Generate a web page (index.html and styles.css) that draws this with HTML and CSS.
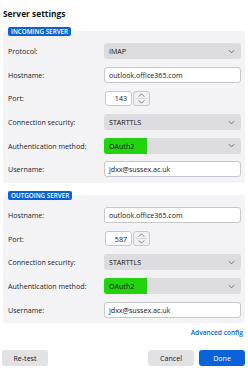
FILE: index.html
```html
<!DOCTYPE html>
<html>
<head>
<meta charset="utf-8">
<link rel="stylesheet" href="styles.css">
</head>
<body>
<div class="page">
  <h1 class="title">Server settings</h1>

  <section class="panel">
    <span class="badge">INCOMING SERVER</span>
    <div class="row"><span class="label">Protocol:</span><div class="select"><span>IMAP</span><svg class="chev" viewBox="0 0 8 5"><path d="M1 1l3 3 3-3" fill="none" stroke="#555" stroke-width="0.9"/></svg></div></div>
    <div class="row"><span class="label">Hostname:</span><div class="input">outlook.office365.com</div></div>
    <div class="row"><span class="label">Port:</span><div class="port"><div class="input num">143</div><div class="spin"><svg viewBox="0 0 16 14"><path d="M5 5l3-3 3 3" fill="none" stroke="#666" stroke-width="0.9"/><path d="M5 9l3 3 3-3" fill="none" stroke="#666" stroke-width="0.9"/><line x1="2" y1="7" x2="14" y2="7" stroke="#ccc" stroke-width="0.7"/></svg></div></div></div>
    <div class="row"><span class="label">Connection security:</span><div class="select"><span>STARTTLS</span><svg class="chev" viewBox="0 0 8 5"><path d="M1 1l3 3 3-3" fill="none" stroke="#555" stroke-width="0.9"/></svg></div></div>
    <div class="row"><span class="label">Authentication method:</span><div class="select"><span class="hl">OAuth2</span><svg class="chev" viewBox="0 0 8 5"><path d="M1 1l3 3 3-3" fill="none" stroke="#555" stroke-width="0.9"/></svg></div></div>
    <div class="row"><span class="label">Username:</span><div class="input">jdxx@sussex.ac.uk</div></div>
  </section>

  <section class="panel">
    <span class="badge">OUTGOING SERVER</span>
    <div class="row"><span class="label">Hostname:</span><div class="input">outlook.office365.com</div></div>
    <div class="row"><span class="label">Port:</span><div class="port"><div class="input num">587</div><div class="spin"><svg viewBox="0 0 16 14"><path d="M5 5l3-3 3 3" fill="none" stroke="#666" stroke-width="0.9"/><path d="M5 9l3 3 3-3" fill="none" stroke="#666" stroke-width="0.9"/><line x1="2" y1="7" x2="14" y2="7" stroke="#ccc" stroke-width="0.7"/></svg></div></div></div>
    <div class="row"><span class="label">Connection security:</span><div class="select"><span>STARTTLS</span><svg class="chev" viewBox="0 0 8 5"><path d="M1 1l3 3 3-3" fill="none" stroke="#555" stroke-width="0.9"/></svg></div></div>
    <div class="row"><span class="label">Authentication method:</span><div class="select"><span class="hl">OAuth2</span><svg class="chev" viewBox="0 0 8 5"><path d="M1 1l3 3 3-3" fill="none" stroke="#555" stroke-width="0.9"/></svg></div></div>
    <div class="row"><span class="label">Username:</span><div class="input">jdxx@sussex.ac.uk</div></div>
  </section>

  <div class="adv"><a class="link">Advanced config</a></div>

  <div class="buttons">
    <button class="btn">Re-test</button>
    <div class="spacer"></div>
    <button class="btn">Cancel</button>
    <button class="btn primary">Done</button>
  </div>
</div>
</body>
</html>
```

FILE: styles.css
```css
* { box-sizing: border-box; }
html, body { margin: 0; padding: 0; background: #fff; }
body { font-family: "Open Sans", "Noto Sans", sans-serif; font-size: 7.1px; color: #15141a; }
.page { padding: 8px 3px 0 3px; }
.title { font-size: 8.4px; font-weight: 700; margin: 0 0 11px 0; line-height: 12px; }
.panel { position: relative; background: #f3f3f5; border-radius: 3px; padding: 8.5px 4px 1.5px 5px; }
.panel + .panel { margin-top: 12.4px; }
.badge { position: absolute; top: -4px; left: 5px; background: #0a62db; color: #fff; font-size: 6.3px; font-weight: 600; line-height: 9px; padding: 0 3px; border-radius: 2px; }
.row { display: flex; align-items: center; height: 23.6px; }
.label { width: 96px; color: #222; }
.select, .input { flex: 1; height: 16px; border-radius: 3px; display: flex; align-items: center; }
.select { background: #dcdcdf; justify-content: space-between; padding-left: 5px; padding-right: 6px; }
.select .hl { background: #22d20c; margin-left: -5px; height: 16px; line-height: 16px; padding: 0 3px 0 5px; width: 43px; border-radius: 3px 0 0 3px; }
.chev { width: 7px; height: 5px; }
.input { background: #fff; border: 1px solid #c8c8cc; padding-left: 4px; }
.port { flex: 0 0 auto; display: flex; align-items: center; height: 16px; margin-left: 1px; }
.input.num { width: 27px; justify-content: flex-end; padding-right: 4px; flex: none; height: 15px; }
.spin { width: 17px; height: 15px; margin-left: 1px; border: 1px solid #c8c8cc; border-radius: 3px; background: #f0f0f2; }
.spin svg { width: 15px; height: 13px; display: block; }
.adv { display: flex; justify-content: flex-end; margin-top: 5px; padding-right: 2px; line-height: 10px; }
.link { color: #0a62db; font-weight: 600; font-size: 6.6px; }
.buttons { display: flex; align-items: center; margin-top: 12px; gap: 5px; }
.spacer { flex: 1; }
.btn { font-family: inherit; font-size: 7.1px; height: 16.5px; width: 46px; border: none; border-radius: 3px; background: #e2e2e5; color: #15141a; padding: 0; }
.btn:first-child { margin-left: -1px; }
.btn.primary { background: #0a62db; color: #fff; }
```
